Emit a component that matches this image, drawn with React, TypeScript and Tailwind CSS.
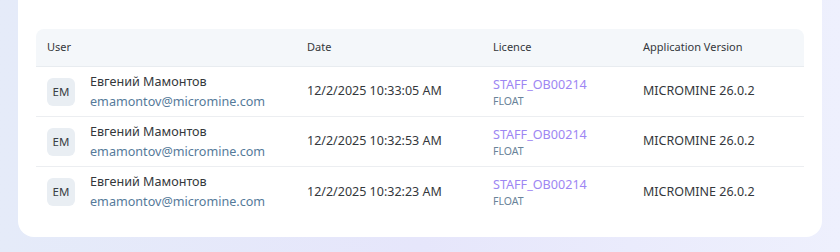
const rows = [
  { date: "12/2/2025 10:33:05 AM" },
  { date: "12/2/2025 10:32:53 AM" },
  { date: "12/2/2025 10:32:23 AM" },
];

const cols = "grid grid-cols-[260px_186px_150px_1fr] items-center";

export default function App() {
  return (
    <div
      className="h-[252px] w-[840px] overflow-hidden bg-gradient-to-r from-[#e5ebf9] via-[#e6e6fb] to-[#eef0fd] px-[18px] text-[#34383c]"
      style={{ fontFamily: '"Noto Sans", "Open Sans", sans-serif' }}
    >
      <div className="rounded-b-[16px] bg-white px-[18px] pb-[20px] pt-[29px]">
        <div className={`${cols} h-[38px] rounded-t-[8px] border-b border-[#e8ecf0] bg-[#f4f7fa] text-[11px]`}>
          <div className="pl-[11px]">User</div>
          <div className="pl-[11px]">Date</div>
          <div className="pl-[11px]">Licence</div>
          <div className="pl-[11px]">Application Version</div>
        </div>
        {rows.map((row, i) => (
          <div
            key={row.date}
            className={`${cols} h-[50px] ${i < rows.length - 1 ? "border-b border-[#eceef1]" : ""}`}
          >
            <div className="flex items-center gap-[15px] pl-[11px]">
              <div className="flex h-[28px] w-[28px] items-center justify-center rounded-[6px] bg-[#e9eef3] text-[11.5px] text-[#3a3f44]">
                EM
              </div>
              <div className="flex flex-col leading-[20px]">
                <span className="text-[12.6px]">Евгений Мамонтов</span>
                <span className="text-[12.6px] text-[#557a9a]">emamontov@micromine.com</span>
              </div>
            </div>
            <div className="pl-[11px] text-[12.5px]">{row.date}</div>
            <div className="flex flex-col pl-[11px]">
              <span className="text-[12.6px] leading-[19px] text-[#9d86f3]">STAFF_OB00214</span>
              <span className="text-[10.5px] leading-[15px] text-[#6a8399]">FLOAT</span>
            </div>
            <div className="pl-[11px] text-[12.5px]">MICROMINE 26.0.2</div>
          </div>
        ))}
      </div>
    </div>
  );
}
